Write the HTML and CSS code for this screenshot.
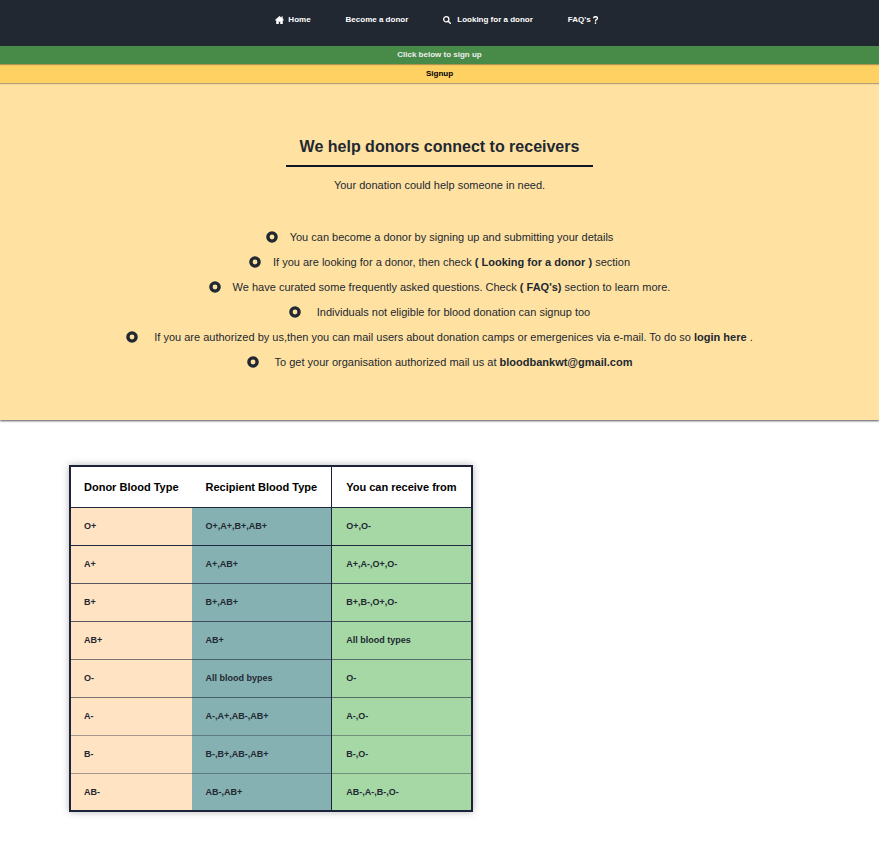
FILE: index.html
```html
<!DOCTYPE html>
<html lang="en">
<head>
<meta charset="utf-8">
<meta name="viewport" content="width=device-width, initial-scale=1">
<title>Blood Bank</title>
<link rel="stylesheet" href="styles.css">
</head>
<body>
<svg class="sprite" aria-hidden="true">
  <symbol id="dot" viewBox="0 0 12 12"><circle cx="6" cy="6" r="4.100" fill="none" stroke="currentColor" stroke-width="3.400"/></symbol>
</svg>
<header>
  <nav class="nav">
    <a href="#" class="nav-link"><svg class="icon home" viewBox="0 0 18 16" aria-hidden="true"><path fill="currentColor" d="M9 0 L0 8 L1 9.200 H2.500 V16 H7.500 V11.500 H10.500 V16 H15.500 V9.200 H17 L18 8 L15.500 5.700 V1 H12.800 V3.300 Z"/></svg>Home</a>
    <a href="#" class="nav-link">Become a donor</a>
    <a href="#" class="nav-link wide"><svg class="icon" viewBox="0 0 16 16" aria-hidden="true"><circle cx="6.500" cy="6.500" r="5.200" fill="none" stroke="currentColor" stroke-width="2.600"/><path d="M10.500 10.500 L14.500 14.500" stroke="currentColor" stroke-width="3" stroke-linecap="round"/></svg>Looking for a donor</a>
    <a href="#" class="nav-link faq">FAQ's<svg class="icon question" viewBox="0 0 10 16" aria-hidden="true"><path d="M1 4.500 Q1.500 1.500 5 1.500 Q9 1.500 9 4.500 Q9 6.300 6.500 7.300 Q5 8 5 10.800" fill="none" stroke="currentColor" stroke-width="2.600"/><circle cx="5" cy="14.200" r="1.700" fill="currentColor"/></svg></a>
  </nav>
</header>
<p class="prompt">Click below to sign up</p>
<a href="#" class="signup">Signup</a>
<section class="intro">
  <h1>We help donors connect to receivers</h1>
  <p class="lead">Your donation could help someone in need.</p>
  <ul class="notes">
    <li><svg class="dot" aria-hidden="true"><use href="#dot"/></svg>You can become a donor by signing up and submitting your details</li>
    <li><svg class="dot" aria-hidden="true"><use href="#dot"/></svg>If you are looking for a donor, then check <a href="#">( Looking for a donor )</a> section</li>
    <li><svg class="dot" aria-hidden="true"><use href="#dot"/></svg>We have curated some frequently asked questions. Check <a href="#">( FAQ's)</a> section to learn more.</li>
    <li class="spaced"><svg class="dot" aria-hidden="true"><use href="#dot"/></svg>Individuals not eligible for blood donation can signup too</li>
    <li class="spaced"><svg class="dot" aria-hidden="true"><use href="#dot"/></svg>If you are authorized by us,then you can mail users about donation camps or emergenices via e-mail. To do so <a href="#">login here</a> .</li>
    <li class="spaced"><svg class="dot" aria-hidden="true"><use href="#dot"/></svg>To get your organisation authorized mail us at <a href="#">bloodbankwt@gmail.com</a></li>
  </ul>
</section>
<main>
  <table class="types">
    <thead>
      <tr><th scope="col">Donor Blood Type</th><th scope="col">Recipient Blood Type</th><th scope="col">You can receive from</th></tr>
    </thead>
    <tbody>
      <tr><td>O+</td><td>O+,A+,B+,AB+</td><td>O+,O-</td></tr>
      <tr><td>A+</td><td>A+,AB+</td><td>A+,A-,O+,O-</td></tr>
      <tr><td>B+</td><td>B+,AB+</td><td>B+,B-,O+,O-</td></tr>
      <tr><td>AB+</td><td>AB+</td><td>All blood types</td></tr>
      <tr><td>O-</td><td>All blood bypes</td><td>O-</td></tr>
      <tr><td>A-</td><td>A-,A+,AB-,AB+</td><td>A-,O-</td></tr>
      <tr><td>B-</td><td>B-,B+,AB-,AB+</td><td>B-,O-</td></tr>
      <tr><td>AB-</td><td>AB-,AB+</td><td>AB-,A-,B-,O-</td></tr>
    </tbody>
  </table>
</main>
</body>
</html>
```
FILE: styles.css
```css
* { box-sizing: border-box; }
body {
  margin: 0;
  font-family: "Liberation Sans", Arial, sans-serif;
  color: #222831;
  background: #fff;
}
a { color: inherit; text-decoration: none; }
.sprite { position: absolute; width: 0; height: 0; }

.nav {
  display: flex;
  flex-wrap: wrap;
  justify-content: center;
  gap: 12px 35px;
  padding: 15px 14px 21px 8px;
  background: #222831;
  color: #fff;
  font-size: 8px;
  font-weight: bold;
  line-height: 10px;
}
.nav-link { display: flex; align-items: center; gap: 4px; }
.nav-link.wide { gap: 6px; }
.nav-link.faq { gap: 2px; }
.icon { width: 8px; height: 8px; }
.icon.home { width: 9px; }
.icon.question { width: 5px; }

.prompt, .signup {
  display: block;
  position: relative;
  margin: 0;
  font-size: 8px;
  font-weight: bold;
  line-height: 18px;
  text-align: center;
  box-shadow: 0 1px 1px rgba(34, 40, 49, .35);
}
.prompt { z-index: 1; background: #488b49; color: #eee; }
.signup { padding: 1px 0 0; background: #ffd062; color: #000; }

.intro {
  padding: 54px 16px 45px;
  background: #ffe2a1;
  text-align: center;
  box-shadow: 0 1px 2px rgba(34, 40, 49, .8);
}
.intro h1 {
  width: fit-content;
  margin: 0 auto;
  padding: 0 14px 8px;
  border-bottom: 2px solid #10162a;
  font-size: 16px;
  line-height: 20px;
}
.lead { margin: 7px 0 0; font-size: 11px; line-height: 22px; }
.notes {
  margin: 29px 0 0;
  padding: 0;
  list-style: none;
  font-size: 11px;
  line-height: 25px;
}
.notes a { font-weight: bold; }
.dot { width: 12px; height: 12px; margin-right: 12px; vertical-align: -2px; }
.spaced .dot { margin-right: 16px; }

main { padding: 45px 16px 46px 69px; }
.types {
  border: 2px solid #1c2237;
  border-spacing: 0;
  border-collapse: collapse;
  box-shadow: 0 0 7px rgba(34, 40, 49, .35);
  text-align: left;
}
.types th, .types td { padding: 0 14px; font-weight: bold; }
.types tr > :first-child { padding: 0 13px; }
.types th {
  height: 41px;
  color: #000;
  font-size: 11px;
}
.types td {
  height: 38px;
  border-top: 1px solid #222840;
  font-size: 9px;
}
/* row rules grow fainter down the table */
.types tbody tr:nth-child(n+3) td { border-top-color: rgba(34, 40, 64, .75); }
.types tbody tr:nth-child(n+5) td { border-top-color: rgba(34, 40, 64, .6); }
.types tbody tr:nth-child(n+7) td { border-top-color: rgba(34, 40, 64, .4); }
.types td:nth-child(1) { background: #ffe3c3; }
.types td:nth-child(2) { background: #86b1b3; }
.types td:nth-child(3) { background: #a5d8a5; }
.types tr > :nth-child(3) { border-left: 1px solid #1c2237; }
```
